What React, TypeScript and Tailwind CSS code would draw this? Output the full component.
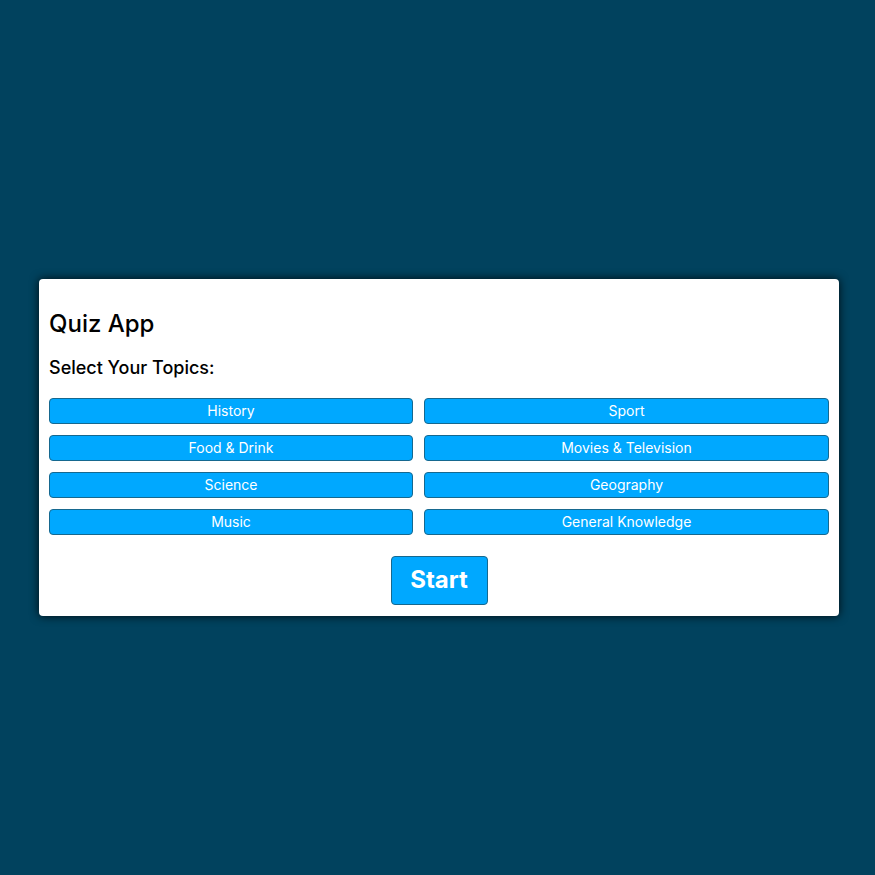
const TOPICS = [
  "History",
  "Sport",
  "Food & Drink",
  "Movies & Television",
  "Science",
  "Geography",
  "Music",
  "General Knowledge",
];

export default function App() {
  return (
    <div
      className="flex min-h-screen items-center bg-[#01425e] pl-[39px]"
      style={{ fontFamily: "Inter, 'Noto Sans', sans-serif" }}
    >
      <div className="mt-[19px] flex w-[800px] flex-col rounded-[4px] bg-white px-[10px] pb-[11px] pt-[29px] shadow-[0_0_10px_rgba(0,0,0,0.85)]">
        <h1 className="text-2xl leading-8 font-medium text-black">Quiz App</h1>
        <h2 className="mt-[14px] text-lg leading-7 font-medium text-black">
          Select Your Topics:
        </h2>
        <div className="mt-[16px] grid grid-cols-[364px_1fr] gap-x-[11px] gap-y-[11px]">
          {TOPICS.map((topic) => (
            <button
              key={topic}
              className="h-[26px] rounded-[4px] border border-[#16688f] bg-[#00a8ff] text-sm text-white"
            >
              {topic}
            </button>
          ))}
        </div>
        <div className="mt-[21px] flex justify-center">
          <button className="h-[49px] w-[97px] rounded-[4px] border border-[#16688f] bg-[#00a8ff] text-2xl font-bold text-white">
            Start
          </button>
        </div>
      </div>
    </div>
  );
}
